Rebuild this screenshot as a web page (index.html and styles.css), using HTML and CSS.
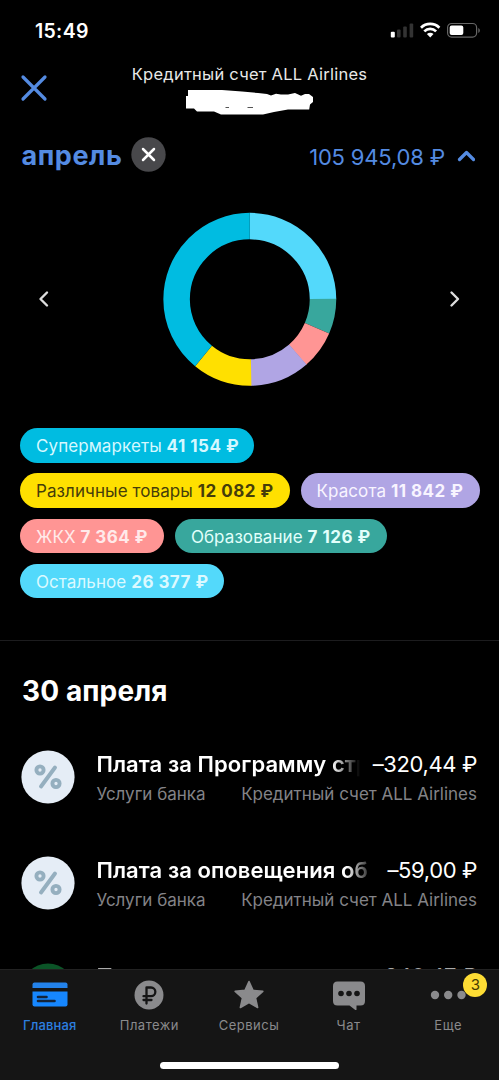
FILE: index.html
```
<!DOCTYPE html>
<html lang="ru">
<head>
<meta charset="utf-8">
<title>Кредитный счет</title>
<link rel="stylesheet" href="styles.css">
</head>
<body>
<div class="screen">
  <div class="status">
    <span class="time">15:49</span>
    <svg class="status-icons" width="90" height="18" viewBox="0 0 90 18">
      <g fill="#333"><rect x="7" y="7.500" width="3.600" height="8" rx="1"/><rect x="13.200" y="4.500" width="3.600" height="11" rx="1"/><rect x="19.600" y="1.500" width="3.600" height="14" rx="1"/></g>
      <rect x="0.800" y="9.800" width="4" height="5.700" rx="1" fill="#fff"/>
      <g fill="none" stroke="#fff" stroke-width="2.700"><path d="M31 5.700a13 13 0 0 1 18.400 0"/><path d="M34.300 9.400a8.300 8.300 0 0 1 11.800 0"/></g>
      <path d="M40.200 15.400l-3.300-3.400a4.700 4.700 0 0 1 6.600 0z" fill="#fff"/>
      <rect x="57.600" y="1.500" width="29" height="13.600" rx="4" fill="none" stroke="#666" stroke-width="1.200"/>
      <rect x="59.700" y="3.600" width="13.600" height="9.500" rx="2" fill="#fff"/>
      <path d="M88.300 6v5c2-.9 2-4.100 0-5z" fill="#666"/>
    </svg>
  </div>

  <header class="header">
    <svg class="close" width="28" height="28" viewBox="0 0 28 28"><path d="M3 3l22 22M25 3L3 25"/></svg>
    <div class="heading">
      <h1 class="account">Кредитный счет ALL Airlines</h1>
      <svg class="scribble" width="130" height="26" viewBox="0 0 130 26">
        <path fill="#fff" d="M3 1h34l20 1.500 16 1.500 9 1 4 1.500 5-1.700 5 .8h7l7-1.500 6 2.700 4-1.800h4l4 3v5l-3 2.500-.8 5H103l-14 2.500-11 2.500H36l-7-3H12l-3-3H1V7h2z"/>
        <path stroke="#555" d="M40.500 18.500h3.500M62.500 18.500h5.500"/>
      </svg>
    </div>
  </header>

  <div class="period">
    <span class="month">апрель</span>
    <svg class="clear" width="35" height="35" viewBox="0 0 35 35"><circle cx="17.500" cy="17.500" r="17.200" fill="#48484b"/><path d="M12 12l11 11M23 12L12 23" stroke="#fff" stroke-width="2.500" stroke-linecap="round"/></svg>
    <span class="total">105 945,08 ₽</span>
    <svg class="caret" width="18" height="12" viewBox="0 0 18 12"><path d="M2.500 9.500L9.500 2.500l7 7"/></svg>
  </div>

  <div class="chart">
    <svg width="12" height="18" viewBox="0 0 12 18" class="arrow"><path d="M9 2.500L2.500 9l6.500 6.500"/></svg>
    <svg class="donut" width="174" height="174" viewBox="-86.800 -87.300 174 174" fill="none" stroke-width="26.500">
      <circle r="73.200" pathLength="1000" stroke="#53d9fb" stroke-dasharray="250 750"/>
      <circle r="73.200" pathLength="1000" stroke="#38a79d" stroke-dasharray="66 934" stroke-dashoffset="-249"/>
      <circle r="73.200" pathLength="1000" stroke="#ff9594" stroke-dasharray="72 928" stroke-dashoffset="-315"/>
      <circle r="73.200" pathLength="1000" stroke="#b0a5e4" stroke-dasharray="112 888" stroke-dashoffset="-386"/>
      <circle r="73.200" pathLength="1000" stroke="#ffe000" stroke-dasharray="112 888" stroke-dashoffset="-497"/>
      <circle r="73.200" pathLength="1000" stroke="#00bce1" stroke-dasharray="391 609" stroke-dashoffset="-609"/>
    </svg>
    <svg width="12" height="18" viewBox="0 0 12 18" class="arrow"><path d="M2.500 2.500L9 9l-6.500 6.500"/></svg>
  </div>

  <div class="chips">
    <span class="chip market">Супермаркеты <b>41 154 ₽</b></span>
    <span class="chip goods">Различные товары <b>12 082 ₽</b></span>
    <span class="chip beauty">Красота <b>11 842 ₽</b></span>
    <span class="chip home">ЖКХ <b>7 364 ₽</b></span>
    <span class="chip study">Образование <b>7 126 ₽</b></span>
    <span class="chip other">Остальное <b>26 377 ₽</b></span>
  </div>

  <section class="list">
    <h2 class="date">30 апреля</h2>
    <div class="row">
      <svg class="badge" width="54" height="54" viewBox="0 0 54 54"><circle cx="27" cy="27" r="26.600" fill="#e5edf6"/><g class="percent"><circle cx="19" cy="20" r="3.600"/><circle cx="35" cy="33.500" r="3.600"/><path d="M34 17.500L20 36.500"/></g></svg>
      <div class="info">
        <div class="line"><span class="name">Плата за Программу стр</span><span class="sum">–320,44 ₽</span></div>
        <div class="sub"><span>Услуги банка</span><span>Кредитный счет ALL Airlines</span></div>
      </div>
    </div>
    <div class="row">
      <svg class="badge" width="54" height="54" viewBox="0 0 54 54"><circle cx="27" cy="27" r="26.600" fill="#e5edf6"/><g class="percent"><circle cx="19" cy="20" r="3.600"/><circle cx="35" cy="33.500" r="3.600"/><path d="M34 17.500L20 36.500"/></g></svg>
      <div class="info">
        <div class="line"><span class="name">Плата за оповещения об</span><span class="sum">–59,00 ₽</span></div>
        <div class="sub"><span>Услуги банка</span><span>Кредитный счет ALL Airlines</span></div>
      </div>
    </div>
    <div class="row">
      <svg class="badge" width="54" height="54" viewBox="0 0 54 54"><circle cx="27" cy="27" r="26.600" fill="#0b5427"/></svg>
      <div class="info">
        <div class="line dim"><span class="name">П</span><span class="sum">–340,47 ₽</span></div>
      </div>
    </div>
  </section>

  <nav class="tabs">
    <div class="tab active">
      <svg width="36" height="30" viewBox="0 0 36 30"><path fill="#2382ea" d="M2.500 2.500h31q2 0 2 2V8h-35V4.500q0-2 2-2z"/><path fill="#1687ff" d="M.5 11.500h35v13q0 2-2 2h-31q-2 0-2-2z"/><path d="M6 17h8.500M6 21h16.500" stroke="#14243a" stroke-width="2.600" stroke-linecap="round"/></svg>
      <span>Главная</span>
    </div>
    <div class="tab">
      <svg width="30" height="30" viewBox="0 0 30 30"><circle cx="15" cy="15" r="14.500" fill="#8a8a8c"/><path d="M12.500 23.500V7.500h4.500a4.200 4.200 0 0 1 0 8.700H9.500M9.500 20h8" fill="none" stroke="#151515" stroke-width="2.300" stroke-linecap="round" stroke-linejoin="round"/></svg>
      <span>Платежи</span>
    </div>
    <div class="tab">
      <svg width="32" height="30" viewBox="0 0 32 30"><path d="M16 1.500l4 8.900 9.800 1-7.300 6.500 2.100 9.600-8.600-5-8.600 5 2.100-9.600-7.300-6.500 9.800-1z" fill="#8a8a8c" stroke="#8a8a8c" stroke-width="1.600" stroke-linejoin="round"/></svg>
      <span>Сервисы</span>
    </div>
    <div class="tab">
      <svg width="34" height="30" viewBox="0 0 34 30"><path d="M5.500 1.500h23q4.500 0 4.500 4.500v15q0 4.500-4.500 4.500H24.500v4q0 1-1.200.4l-5.800-4.400h-12Q1 25.500 1 21V6q0-4.500 4.500-4.500z" fill="#8a8a8c"/><g fill="#151515"><circle cx="9" cy="13.500" r="2.800"/><circle cx="17" cy="13.500" r="2.800"/><circle cx="25" cy="13.500" r="2.800"/></g></svg>
      <span>Чат</span>
    </div>
    <div class="tab">
      <svg width="36" height="30" viewBox="0 0 36 30" fill="#8a8a8c"><circle cx="5" cy="15" r="4.200"/><circle cx="18.200" cy="15" r="4.200"/><circle cx="31.500" cy="15" r="4.200"/></svg>
      <span>Еще</span>
      <i class="count">3</i>
    </div>
    <div class="home-bar"></div>
  </nav>
</div>
</body>
</html>
```
FILE: styles.css
```
* { box-sizing: border-box; }
body { margin: 0; background: #000; color: #fff; font-family: Inter, "Liberation Sans", sans-serif; }
svg { display: block; flex: none; }
.screen { width: 499px; height: 1080px; overflow: hidden; position: relative; display: flex; flex-direction: column; }

.status { height: 60px; padding: 22px 19px 0 35px; display: flex; justify-content: space-between; }
.time { font-size: 19.500px; line-height: 18px; font-weight: 600; letter-spacing: .3px; }

.header { height: 68px; position: relative; padding: 4px 0 0; }
.close { position: absolute; left: 20px; top: 14px; }
.close path, .caret path { fill: none; stroke: #548be2; stroke-width: 3.200; stroke-linecap: round; stroke-linejoin: round; }
.heading { display: flex; flex-direction: column; align-items: center; }
.account { margin: 0; font-size: 16.500px; line-height: 20px; font-weight: 400; letter-spacing: .24px; color: #e8e8e8; }
.scribble { margin-top: 5px; }

.period { height: 52px; padding: 0 24px 0 21.500px; display: flex; align-items: center; color: #548be2; }
.month { font-size: 27px; font-weight: 700; letter-spacing: .55px; padding-top: 2px; }
.clear { margin-left: 9px; }
.total { margin-left: auto; padding-top: 5px; font-size: 22px; letter-spacing: -.17px; }
.caret { margin: 3px 0 0 12px; }

.chart { height: 248px; padding: 32px 38px 0; display: flex; justify-content: space-between; align-items: flex-start; }
.arrow { margin-top: 78px; fill: none; stroke: #ddd; stroke-width: 2.400; stroke-linecap: round; stroke-linejoin: round; }
.donut circle { transform: rotate(-90deg); }

.chips { height: 213px; padding: 0 16px 0 20px; display: flex; flex-wrap: wrap; align-content: flex-start; gap: 10.800px 11px; border-bottom: 1px solid #1c1c1e; }
.chip { height: 34.500px; padding: 0 16px; border-radius: 18px; font-size: 17px; line-height: 36px; letter-spacing: .08px; white-space: nowrap; }
.chip b { font-weight: 700; letter-spacing: .48px; }
.market { background: #00bce1; color: #d5f8ff; padding-right: 15.500px; }
.goods { background: #ffe000; color: #453d0a; }
.beauty { background: #b0a5e4; color: #f8f4ff; padding-right: 17px; }
.home { background: #ff9594; color: #ffeaea; }
.study { background: #38a79d; color: #e2fffb; }
.other { background: #53d9fb; color: #dcf9ff; padding-right: 15px; }

.list { padding: 33px 22px 0 21px; }
.date { margin: 0 0 41.500px 1px; font-size: 28px; line-height: 34px; font-weight: 700; letter-spacing: .12px; }
.row { display: flex; height: 106.500px; }
.info { flex: 1; min-width: 0; margin-left: 21.500px; }
.line { display: flex; gap: 13px; font-size: 22px; line-height: 28px; white-space: nowrap; }
.name { flex: 1; min-width: 0; overflow: hidden; font-weight: 600; letter-spacing: .07px; mask-image: linear-gradient(to left, transparent, #000 28px); }
.sum { letter-spacing: -.38px; }
.sub { display: flex; justify-content: space-between; margin-top: 4px; font-size: 17px; line-height: 24px; color: #838387; }
.percent { fill: none; stroke: #95afbf; stroke-width: 3.900; stroke-linecap: round; }
.dim { margin-top: -1px; color: #aaa; }

.tabs { position: absolute; left: 0; right: 0; bottom: 0; height: 111px; background: #151515; border-top: 1px solid #222; display: flex; padding: 10px 1px 0 0; }
.tab { position: relative; flex: 1; display: flex; flex-direction: column; align-items: center; font-size: 13px; line-height: 16px; letter-spacing: .5px; gap: 7px; color: #8a8a8c; }
.active { color: #2c7fe0; font-weight: 500; letter-spacing: .15px; }
.count { position: absolute; left: 65px; top: -7px; width: 24px; height: 24px; border-radius: 50%; background: #fddc34; color: #443a00; font: 15px/24px Inter, sans-serif; letter-spacing: 0; text-align: center; }
.home-bar { position: absolute; left: 160px; bottom: 11px; width: 179px; height: 7px; border-radius: 4px; background: #fff; }
```
